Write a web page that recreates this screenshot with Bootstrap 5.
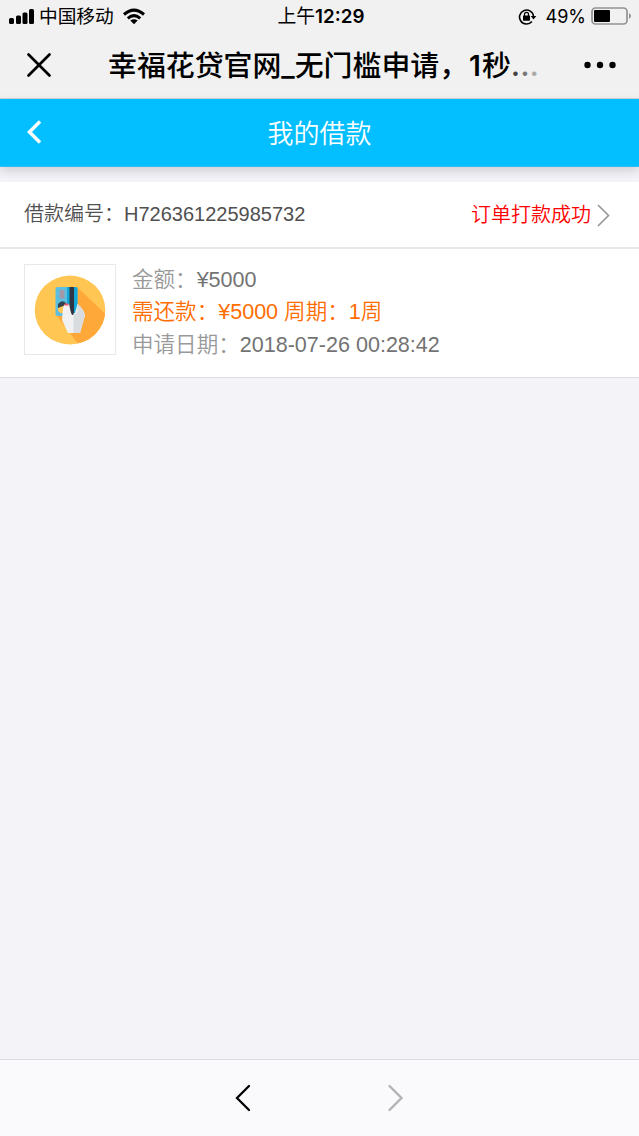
<!DOCTYPE html>
<html lang="zh-CN">
<head>
<meta charset="utf-8">
<meta name="viewport" content="width=device-width, initial-scale=1">
<title>我的借款</title>
<link href="https://cdn.jsdelivr.net/npm/bootstrap@5.3.0/dist/css/bootstrap.min.css" rel="stylesheet">
<style>
body{background:#f4f3f8;font-family:"Liberation Sans","Noto Sans CJK SC",sans-serif;font-weight:350;color:#000;overflow:hidden}
svg{display:block;flex:none}
.status-bar{height:32px;background:#f1f1f1;font:18.7px/32px Inter,"Noto Sans CJK SC",sans-serif;padding:1px 8px 0 9px}
.status-bar .side{flex:1 1 0}
.status-bar .percent{font-size:18px;margin:0 5px 0 9px}
.clock{font-weight:600;font-size:18.8px;position:relative;left:1px}
.clock b{font-weight:400}
.title-bar{height:67px;background:#f1f1f1;border-bottom:1px solid #cfd3d5;padding:0 22px 0 26px}
.page-title{font:500 28.9px/66px Inter,"Noto Sans CJK SC",sans-serif;margin-left:56px;width:450px;padding-top:1px}
.page-title .num{font-size:28px;font-weight:600;padding:0 1px}
.dots{font-size:31px}
.dots i{font-style:normal}
.app-header{height:68px;background:#04bfff;border-bottom:1px solid #2dbcf0;box-shadow:0 4px 10px rgba(0,0,0,.15);color:#fff;padding-left:26px}
.app-header h1{font-size:26px;line-height:64px;font-weight:350;padding:3px 43px 0 0}
.order-head{margin-top:15px;height:67px;border-bottom:2px solid #e8e8ea;padding:0 29px 0 24px;font-size:20px;line-height:65px;color:#505050}
.state{color:#f00;padding-top:1px}
.order-body{height:129px;border-bottom:1px solid #dedee0;padding:15px 24px}
.thumb{width:92px;height:91px;border:1px solid #e8e8e8;margin-right:16px}
.facts{font-size:21.55px;line-height:32.4px;color:#737373}
.facts .key{color:#999}
.facts .due{color:#ff6d00}
.nav-foot{height:77px;background:#fafafc;border-top:1px solid #dcdbe1;padding-left:235px}
</style>
<script src="https://cdn.jsdelivr.net/npm/bootstrap@5.3.0/dist/js/bootstrap.bundle.min.js"></script>
</head>
<body>
<div class="d-flex flex-column vh-100">
  <div class="status-bar d-flex align-items-center">
    <div class="side d-flex align-items-center">
      <svg width="26" height="16" viewBox="0 0 26 16"><rect x="0" y="9" width="5" height="6" rx="1.5"/><rect x="7" y="6.500" width="5" height="8.500" rx="1.500"/><rect x="13.500" y="3.500" width="5" height="11.500" rx="1.500"/><rect x="20" y="0" width="5" height="15" rx="1.500"/></svg>
      <span class="ms-1">中国移动</span>
      <svg class="ms-2" width="24" height="17" viewBox="0 0 24 17" fill="none" stroke="#000" stroke-width="3"><path d="M2 6.500Q12-2.300 22 6.500M5.800 10.300Q12 5 18.200 10.300"/><path d="M8.300 12.500Q12 9.800 15.700 12.500L12 16.200Z" fill="#000" stroke="none"/></svg>
    </div>
    <div class="clock"><b>上午</b>12:29</div>
    <div class="side d-flex align-items-center justify-content-end">
      <svg width="19" height="18" viewBox="0 0 19 18"><path d="M13.900 13.500A7 7 0 1 1 15.500 8.500" fill="none" stroke="#000" stroke-width="1.600"/><path d="M12.700 8h5.600l-2.800 3.500z"/><rect x="5" y="7.500" width="7" height="5.200" rx=".6"/><path d="M6.500 8V6.400a2 2 0 0 1 4 0V8" fill="none" stroke="#000" stroke-width="1.300"/></svg>
      <span class="percent">49%</span>
      <svg style="margin-top:-1px" width="40" height="18" viewBox="0 0 40 18"><rect x="1" y="1" width="35" height="16" rx="3.500" fill="none" stroke="#929292" stroke-width="1.700"/><rect x="3" y="3" width="16" height="12" rx="1"/><path d="M38 6q4 3 0 6z" fill="#929292"/></svg>
    </div>
  </div>
  <div class="title-bar d-flex align-items-center">
    <svg width="26" height="26" viewBox="0 0 26 26"><path d="M2.500 2.500l21 21m0-21l-21 21" stroke="#000" stroke-width="2.700" stroke-linecap="round"/></svg>
    <div class="page-title text-nowrap">幸福花贷官网_无门槛申请，<span class="num">1</span>秒<span class="dots"><i style="color:#444">.</i><i style="color:#777">.</i><i style="color:#aaa">.</i></span></div>
    <svg class="ms-auto" width="34" height="8" viewBox="0 0 34 8"><circle cx="4.500" cy="4" r="3.200"/><circle cx="17" cy="4" r="3.200"/><circle cx="29.500" cy="4" r="3.200"/></svg>
  </div>
  <header class="app-header d-flex align-items-center">
    <svg style="margin-top:-2px" width="17" height="24" viewBox="0 0 17 24"><path d="M14 1.500L3.500 12 14 22.500" fill="none" stroke="#fff" stroke-width="3.500"/></svg>
    <h1 class="flex-fill text-center m-0">我的借款</h1>
  </header>
  <section class="order-head bg-white d-flex align-items-center">
    <span>借款编号：H726361225985732</span>
    <span class="state ms-auto">订单打款成功</span>
    <svg style="margin:2px 0 0 6px" width="13" height="23" viewBox="0 0 13 23"><path d="M1 1l10.500 10.500L1 22" fill="none" stroke="#999" stroke-width="1.700"/></svg>
  </section>
  <section class="order-body bg-white d-flex">
    <div class="thumb">
      <svg width="90" height="89" viewBox="0 0 90 89">
        <defs><clipPath id="disc"><ellipse cx="45" cy="45" rx="35.300" ry="34.500"/></clipPath></defs>
        <ellipse cx="45" cy="45" rx="35.300" ry="34.500" fill="#ffc654"/>
        <path clip-path="url(#disc)" d="M52 22l38 36-20 30H60L32 51z" fill="#ffa83a"/>
        <rect x="30.500" y="22" width="22" height="29" rx="2" fill="#5dbfdf"/>
        <path d="M42 22h8.500q2 0 2 2v25H42z" fill="#12a7d6"/>
        <path d="M34.500 25h5v8.500h-5z" fill="#a299a8"/>
        <circle cx="37" cy="44" r="4.200" fill="#ffc654"/>
        <path d="M33 39q4-5 8-1l1 5-4-2-5 2z" fill="#334250"/>
        <path d="M39 40q3-2 6 0l2 8h3l2.500-9q6 5 7.500 11l-5 18H43l-6-13 1-12z" fill="#f1f1f1"/>
        <path d="M48.500 50l4-3v-8q6 5 7.500 11l-5 18h-6.500z" fill="#d9dcde"/>
        <path d="M44.500 22H49v24q0 4-1.500 4-1 0-2-4l-1-5z" fill="#303443"/>
        <path d="M39.500 39.500h4" stroke="#ed5365" stroke-width="2"/>
      </svg>
    </div>
    <div class="facts">
      <div><span class="key">金额：</span>¥5000</div>
      <div class="due">需还款：¥5000 周期：1周</div>
      <div><span class="key">申请日期：</span>2018-07-26 00:28:42</div>
    </div>
  </section>
  <nav class="nav-foot mt-auto d-flex align-items-center">
    <svg width="17" height="28" viewBox="0 0 17 28"><path d="M14 2L2 14l12 12" fill="none" stroke="#000" stroke-width="2.300" stroke-linecap="round"/></svg>
    <svg style="margin-left:135px" width="17" height="28" viewBox="0 0 17 28"><path d="M2.500 2l12 12-12 12" fill="none" stroke="#b2b2b2" stroke-width="2.300" stroke-linecap="round"/></svg>
  </nav>
</div>
</body>
</html>
